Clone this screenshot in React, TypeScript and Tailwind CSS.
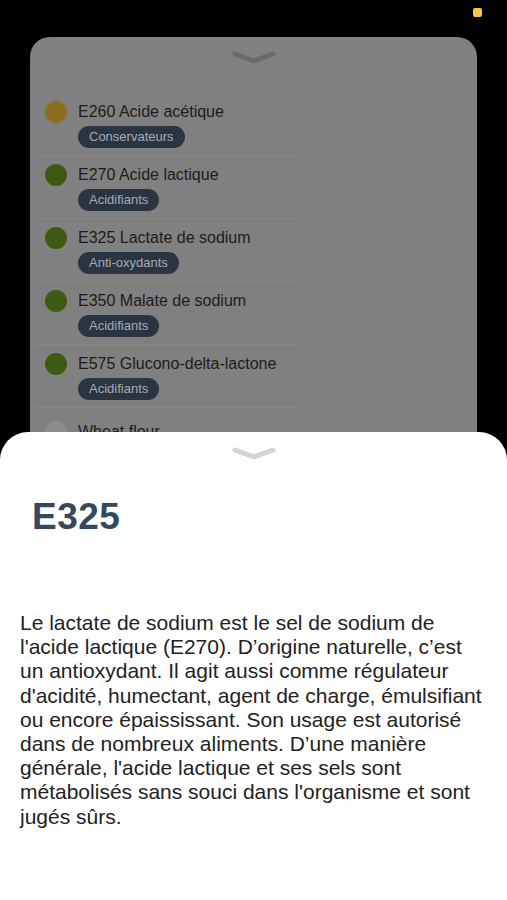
const additives = [
  { code: 'E260 Acide acétique', tag: 'Conservateurs', dot: 'bg-[#8b6b1c]' },
  { code: 'E270 Acide lactique', tag: 'Acidifiants', dot: 'bg-[#3c5a11]' },
  { code: 'E325 Lactate de sodium', tag: 'Anti-oxydants', dot: 'bg-[#3c5a11]' },
  { code: 'E350 Malate de sodium', tag: 'Acidifiants', dot: 'bg-[#3c5a11]' },
  { code: 'E575 Glucono-delta-lactone', tag: 'Acidifiants', dot: 'bg-[#3c5a11]' },
]

const description = [
  'Le lactate de sodium est le sel de sodium de',
  "l'acide lactique (E270). D’origine naturelle, c’est",
  'un antioxydant. Il agit aussi comme régulateur',
  "d'acidité, humectant, agent de charge, émulsifiant",
  'ou encore épaississant. Son usage est autorisé',
  'dans de nombreux aliments. D’une manière',
  "générale, l'acide lactique et ses sels sont",
  "métabolisés sans souci dans l'organisme et sont",
  'jugés sûrs.',
]

function Chevron({ color }: { color: string }) {
  return (
    <svg width="46" height="18" viewBox="0 0 46 18" fill="none">
      <path d="M4 5 L23 12 L42 5" stroke={color} strokeWidth="5" strokeLinecap="round" strokeLinejoin="round" />
    </svg>
  )
}

export default function App() {
  return (
    <div className="relative h-[900px] overflow-hidden bg-black flex flex-col font-['Liberation_Sans',Arial,sans-serif]">
      <div className="absolute top-[8px] left-[473px] w-[9px] h-[9px] rounded-[2px] bg-[#f5c843]" />

      {/* dimmed list behind the sheet */}
      <div className="mt-[37px] mx-[30px] h-[440px] flex-none overflow-hidden rounded-t-[20px] bg-[#808080]">
        <div className="flex justify-center pt-[12px]">
          <Chevron color="#6b6b6b" />
        </div>
        <div className="mt-[26px] ml-[3px] w-[266px]">
          {additives.map((a) => (
            <div key={a.code} className="flex gap-[11px] px-[12px] pt-[8px] pb-[7px] border-b border-[#878787]">
              <div className={`w-[22px] h-[22px] rounded-full flex-none ${a.dot}`} />
              <div className="flex flex-col items-start">
                <div className="text-[16px] leading-[22px] text-[#1c1c1c]">{a.code}</div>
                <div className="mt-[3px] h-[22px] px-[11px] rounded-full bg-[#2b3441] text-[13px] leading-[22px] text-[#a3acb8]">
                  {a.tag}
                </div>
              </div>
            </div>
          ))}
          <div className="mt-[5px] flex gap-[11px] px-[12px] pt-[8px]">
            <div className="w-[22px] h-[22px] rounded-full flex-none bg-[#8c8c8c]" />
            <div className="text-[16px] leading-[22px] text-[#1c1c1c]">Wheat flour</div>
          </div>
        </div>
      </div>

      {/* bottom sheet */}
      <div className="relative -mt-[45px] flex-1 rounded-t-[28px] bg-white">
        <div className="flex justify-center pt-[13px]">
          <Chevron color="#d3d3d3" />
        </div>
        <h1 className="mt-[35px] ml-[32px] text-[37px] leading-[37px] font-bold tracking-[0.5px] text-[#34495e]">E325</h1>
        <p className="mt-[76px] pl-[20px] text-[21px] leading-[24.2px] text-[#222222] whitespace-nowrap">
          {description.map((line) => (
            <span key={line} className="block">{line}</span>
          ))}
        </p>
      </div>
    </div>
  )
}
